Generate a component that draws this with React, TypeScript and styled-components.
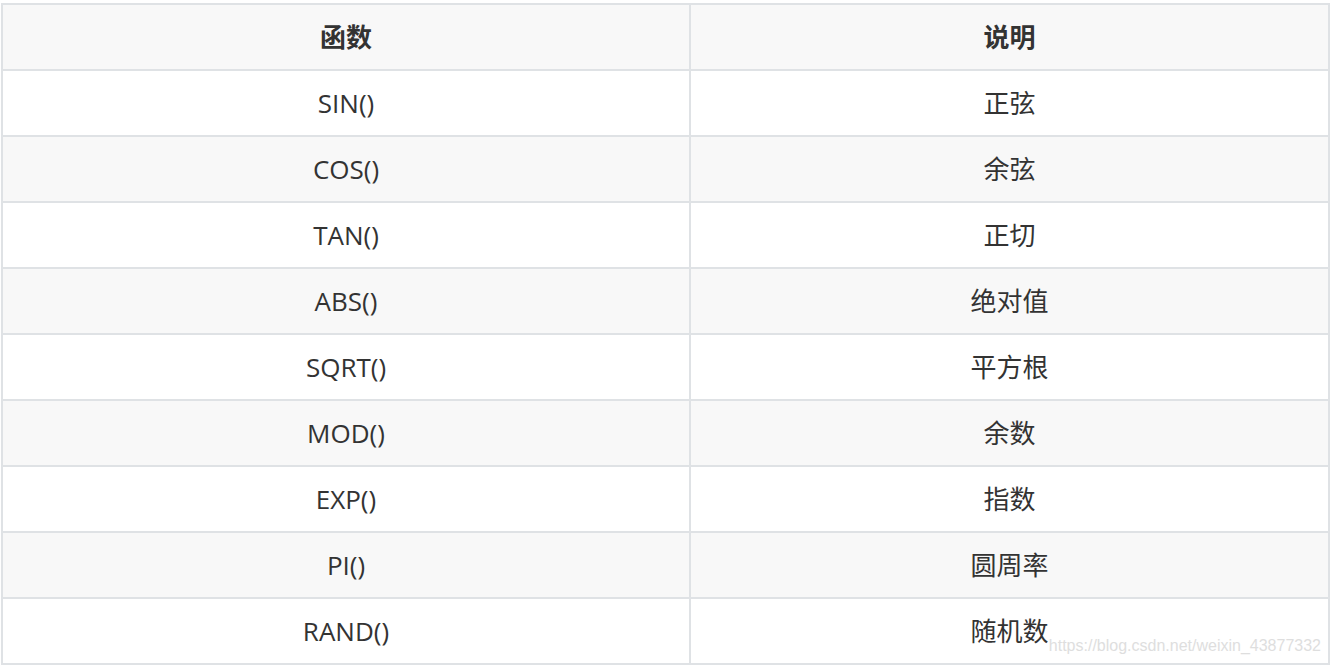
import React from "react";
import styled, { createGlobalStyle } from "styled-components";

const rows: [string, string][] = [
  ["SIN()", "正弦"],
  ["COS()", "余弦"],
  ["TAN()", "正切"],
  ["ABS()", "绝对值"],
  ["SQRT()", "平方根"],
  ["MOD()", "余数"],
  ["EXP()", "指数"],
  ["PI()", "圆周率"],
  ["RAND()", "随机数"],
];

const App: React.FC = () => {
  return (
    <Page>
      <GlobalStyle />
      <Table>
        <colgroup>
          <col style={{ width: 688 }} />
          <col style={{ width: 639 }} />
        </colgroup>
        <thead>
          <Row $shaded>
            <HeadCell>函数</HeadCell>
            <HeadCell>说明</HeadCell>
          </Row>
        </thead>
        <tbody>
          {rows.map(([fn, desc], i) => (
            <Row key={fn} $shaded={i % 2 === 1}>
              <Cell>{fn}</Cell>
              <Cell>{desc}</Cell>
            </Row>
          ))}
        </tbody>
      </Table>
      <Watermark>https://blog.csdn.net/weixin_43877332</Watermark>
    </Page>
  );
};

export default App;

const GlobalStyle = createGlobalStyle`
  body {
    margin: 0;
    background: #fff;
  }
`;

const Page = styled.div`
  position: relative;
  width: 1330px;
  height: 666px;
  padding: 3px 0 0 1px;
  box-sizing: border-box;
  font-family: "Open Sans", "Noto Sans CJK SC", sans-serif;
  color: #333;
`;

const Table = styled.table`
  width: 1329px;
  table-layout: fixed;
  border-collapse: separate;
  border-spacing: 0;
  border-top: 2px solid #dfe2e5;
  border-left: 2px solid #dfe2e5;
`;

const Row = styled.tr<{ $shaded?: boolean }>`
  background: ${(p) => (p.$shaded ? "#f8f8f8" : "#fff")};
`;

const Cell = styled.td`
  height: 64px;
  padding: 0;
  border-right: 2px solid #dfe2e5;
  border-bottom: 2px solid #dfe2e5;
  text-align: center;
  vertical-align: middle;
  font-size: 26px;
  line-height: 64px;
`;

const HeadCell = styled(Cell).attrs({ as: "th" })`
  font-weight: 700;
`;

const Watermark = styled.div`
  position: absolute;
  right: 9px;
  top: 637px;
  font-family: "Liberation Sans", Arial, sans-serif;
  font-size: 16px;
  color: #dedede;
  pointer-events: none;
`;
